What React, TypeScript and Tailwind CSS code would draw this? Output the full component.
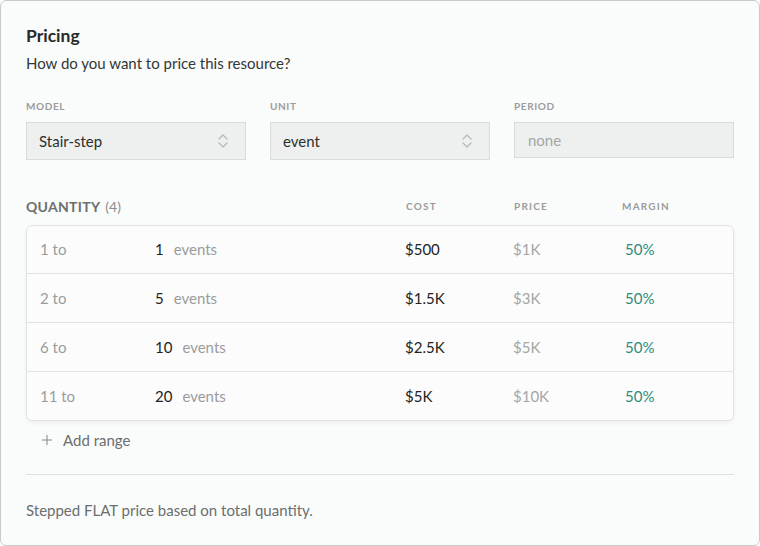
import React from 'react';
import { Plus } from 'lucide-react';

type Tier = { from: number; to: number; cost: string; price: string; margin: string };

const tiers: Tier[] = [
  { from: 1, to: 1, cost: '$500', price: '$1K', margin: '50%' },
  { from: 2, to: 5, cost: '$1.5K', price: '$3K', margin: '50%' },
  { from: 6, to: 10, cost: '$2.5K', price: '$5K', margin: '50%' },
  { from: 11, to: 20, cost: '$5K', price: '$10K', margin: '50%' },
];

const Chevrons = () => (
  <svg width="12" height="16" viewBox="0 0 12 16" fill="none" stroke="#b4b8b6" strokeWidth="1.2" strokeLinecap="round" strokeLinejoin="round">
    <path d="M2 6 L6 2 L10 6" />
    <path d="M2 10 L6 14 L10 10" />
  </svg>
);

const FieldLabel = ({ children }: { children: React.ReactNode }) => (
  <div className="text-[10px] font-bold tracking-[0.06em] text-[#9a9c9b] uppercase leading-none mb-[11px]">{children}</div>
);

const App: React.FC = () => {
  return (
    <div className="w-[760px] h-[546px] bg-white" style={{ fontFamily: 'Lato, "Noto Sans", sans-serif' }}>
      <div className="h-full w-full rounded-[6px] border border-[#c9cbca] bg-[#fafbfb] px-[25px] pt-[25px] flex flex-col">
        {/* Header */}
        <h2 className="text-[17.5px] font-bold text-[#262a28] leading-5">Pricing</h2>
        <p className="text-[15px] text-[#333836] mt-[7px] leading-5">How do you want to price this resource?</p>

        {/* Selects */}
        <div className="grid grid-cols-3 gap-6 mt-[28px]">
          <div>
            <FieldLabel>Model</FieldLabel>
            <div className="h-[38px] border border-[#d9dcda] bg-[#eef0ef] flex items-center justify-between pl-[12px] pr-[16px] text-[15px] text-[#2b2f2d]">
              <span>Stair-step</span>
              <Chevrons />
            </div>
          </div>
          <div>
            <FieldLabel>Unit</FieldLabel>
            <div className="h-[38px] border border-[#d9dcda] bg-[#eef0ef] flex items-center justify-between pl-[12px] pr-[16px] text-[15px] text-[#2b2f2d]">
              <span>event</span>
              <Chevrons />
            </div>
          </div>
          <div>
            <FieldLabel>Period</FieldLabel>
            <div className="h-[36px] border border-[#d9dcda] bg-[#eef0ef] flex items-center pl-[13px] text-[15px] text-[#a3a6a5]">
              none
            </div>
          </div>
        </div>

        {/* Table header */}
        <div className="grid grid-cols-[380px_108px_108px_1fr] items-center mt-[39px] h-[14px]">
          <div className="text-[14px] font-bold text-[#6b6f6d] uppercase tracking-[0.02em] leading-none">
            Quantity <span className="font-normal text-[#8d908f] normal-case tracking-normal ml-[2px]">(4)</span>
          </div>
          <div className="text-[10px] font-bold text-[#9a9c9b] tracking-[0.12em] uppercase">Cost</div>
          <div className="text-[10px] font-bold text-[#9a9c9b] tracking-[0.12em] uppercase">Price</div>
          <div className="text-[10px] font-bold text-[#9a9c9b] tracking-[0.12em] uppercase">Margin</div>
        </div>

        {/* Table */}
        <div className="mt-[12px] rounded-[6px] border border-[#e1e3e2] bg-[#fcfcfc] shadow-[0_2px_4px_rgba(0,0,0,0.05)]">
          {tiers.map((t, i) => (
            <div
              key={i}
              className={`grid grid-cols-[115px_250px_108px_112px_1fr] items-center pl-[13px] text-[15px] ${i > 0 ? 'h-[49px] border-t border-[#e1e3e2]' : 'h-[47px]'}`}
            >
              <div className="text-[#9a9d9c]">{t.from} to</div>
              <div className="flex items-center">
                <span className="text-[#1f2321]">{t.to}</span>
                <span className="text-[#9a9d9c] ml-[10px]">events</span>
              </div>
              <div className="text-[#1f2321]">{t.cost}</div>
              <div className="text-[#a3a6a5]">{t.price}</div>
              <div className="text-[#2b8c7d]">{t.margin}</div>
            </div>
          ))}
        </div>

        {/* Add range */}
        <div className="flex items-center gap-[8px] pl-[13px] mt-[8px] text-[15px] text-[#6b6f6d]">
          <Plus size={16} strokeWidth={1.4} color="#7b7f7d" />
          <span>Add range</span>
        </div>

        <div className="border-t border-[#dfe1e0] mt-[22px]" />

        <p className="text-[15px] text-[#6b6f6d] mt-[24px]">Stepped FLAT price based on total quantity.</p>
      </div>
    </div>
  );
};

export default App;
